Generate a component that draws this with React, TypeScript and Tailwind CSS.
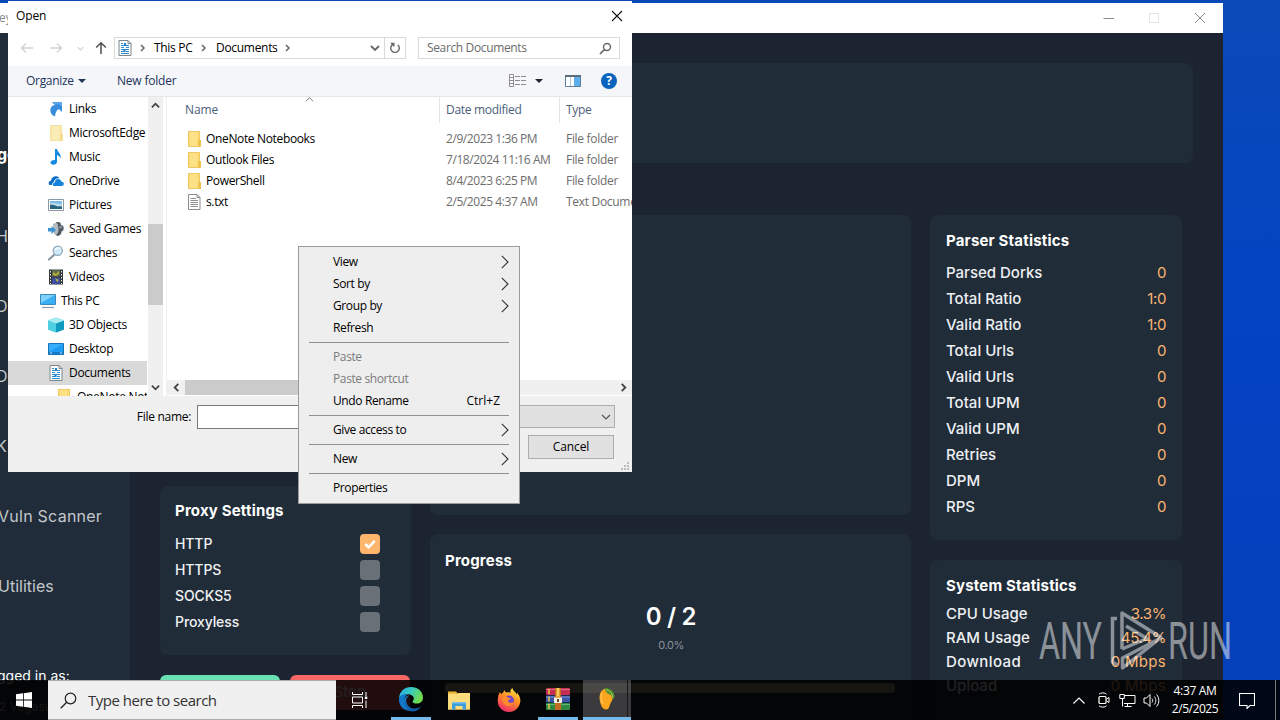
import React from "react";

const SEG = "font-['Open_Sans','Noto_Sans',sans-serif]";
const POP = "font-['Inter','Open_Sans',sans-serif]";

/* ---------- small icons ---------- */

function Folder({ pale = false }: { pale?: boolean }) {
  return (
    <svg width="16" height="16" viewBox="0 0 16 16" className="shrink-0">
      <path d="M2 0h12v16H2z" fill={pale ? "#f8e7a8" : "#fbdc77"} />
      <path d="M2.500 .5h11v15h-11z" fill="none" stroke={pale ? "#f3e1a0" : "#efc862"} />
      <path d="M12 9h3v7h-3z" fill={pale ? "#f4dd91" : "#efc14f"} />
      <path d="M4 1h7v14H4z" fill={pale ? "#fbeebb" : "#fde38d"} opacity=".7" />
    </svg>
  );
}

function DocIcon() {
  return (
    <svg width="16" height="16" viewBox="0 0 16 16" className="shrink-0">
      <path d="M2 .5h9l3 3v12H2z" fill="#fdfdfd" stroke="#7d868d" />
      <path d="M11 .5v3h3" fill="none" stroke="#7d868d" />
      <path d="M4 3.500h2M4 5.500h8M4 7.500h3M9 7.500h3M4 9.500h8M4 11.500h3M9 11.500h3M4 13.500h8" stroke="#2f8bd0" />
      <path d="M7 3h2v3H7zM6.500 9h2v3h-2z" fill="#2382cf" />
    </svg>
  );
}

function TxtIcon() {
  return (
    <svg width="16" height="16" viewBox="0 0 16 16" className="shrink-0">
      <path d="M2.500 .5h8.500l3 3v12H2.500z" fill="#fff" stroke="#8b8b8b" />
      <path d="M11 .5v3h3" fill="none" stroke="#8b8b8b" />
      <path d="M4.500 4.500H10M4.500 6.500H12M4.500 8.500H12M4.500 10.500H12M4.500 12.500H12" stroke="#8f8f8f" />
    </svg>
  );
}

function LinksIcon() {
  return (
    <svg width="16" height="16" viewBox="0 0 16 16" className="shrink-0">
      <path d="M4 1h10v10l-3.200-3C8 9.500 7.500 12 7 15.500 2.500 14 1.500 9 3 6.500c1-1.700 2-2 4-2.500z" fill="#3a8ddb" />
      <path d="M4 1h10v4C11 3 8 3 7 4z" fill="#5aa6ea" />
    </svg>
  );
}

function MusicIcon() {
  return (
    <svg width="16" height="16" viewBox="0 0 16 16" className="shrink-0">
      <path d="M7 0h2c.3 3 4.500 4.500 3.700 9.500-.9-2.300-2-3-3.700-3.300V13c0 1.500-1.800 2.800-3.800 2.800-1.600 0-2.700-.9-2.700-2.200 0-1.700 2-2.900 4.500-2.700z" fill="#138bdf" />
    </svg>
  );
}

function OneDriveIcon() {
  return (
    <svg width="16" height="16" viewBox="0 0 16 16" className="shrink-0">
      <path d="M1 11.500C0 9.500 1.500 7.800 3 7.700 3.500 5 5.500 3.200 8 3.300c1.500 0 2.800.8 3.500 2C8 5 6 7 5.700 9.200 4.200 9.800 4 11 4.200 12 2.500 12.300 1.500 12 1 11.500z" fill="#0a6cc4" />
      <path d="M5 12.500c-.5-1.800.5-2.800 1.800-3C7 7 8.500 6 10 6c2 0 3 1.200 3.200 2.600 1.800 0 2.600 1 2.600 2.200 0 1.500-1 2.200-2.500 2.200H6.500c-.8 0-1.300-.1-1.500-.5z" fill="#1583dd" />
    </svg>
  );
}

function PicturesIcon() {
  return (
    <svg width="16" height="16" viewBox="0 0 16 16" className="shrink-0">
      <path d="M.5 2.500h15v11H.5z" fill="#fff" stroke="#8b97a1" />
      <path d="M2 4h12v8H2z" fill="#79bbe8" />
      <path d="M2 6.500c4-2 7 1.500 12 0V12H2z" fill="#b8d9e8" />
      <path d="M2 8c3-1 5 .5 7 1.200 2 .6 3-.3 5 .3V12H2z" fill="#2b6183" />
    </svg>
  );
}

function GamesIcon() {
  return (
    <svg width="16" height="16" viewBox="0 0 16 16" className="shrink-0">
      <path d="M8 1.500c3-1 5 0 5 2.500 2.500.5 3 2 2.500 4.500-.3 1.500-1.500 2-2 1.500.3 2.500-1 4.500-3.500 5-2-.5-4-2-4-5z" fill="#4e585f" />
      <path d="M5 3c1.500-1.500 4-1.500 5 0-.5 3 1 4 .5 7-.5 2-1.500 3-2.500 4-2-1-3-6-3-11z" fill="#b4bcc1" />
      <path d="M0 7h3.500V5L8 9l-4.500 4v-2.500H0z" fill="#3c91d3" />
      <circle cx="12.500" cy="6" r="1.500" fill="#8c969c" />
    </svg>
  );
}

function SearchesIcon() {
  return (
    <svg width="16" height="16" viewBox="0 0 16 16" className="shrink-0">
      <path d="M1 14.500 6.500 9.500" stroke="#8b98a3" strokeWidth="2.200" strokeLinecap="round" />
      <circle cx="9.800" cy="5.800" r="4.600" fill="#cfe8f8" stroke="#8fa9bb" strokeWidth="1.200" />
      <path d="M7 5c.8-2 3-2.800 5-1.500" stroke="#fff" strokeWidth="1.300" fill="none" />
    </svg>
  );
}

function VideosIcon() {
  return (
    <svg width="16" height="16" viewBox="0 0 16 16" className="shrink-0">
      <path d="M1 .5h14v15H1z" fill="#33363b" />
      <path d="M4 1h8v6.500H4z" fill="#5b6b4c" />
      <path d="M4 8.500h8V15H4z" fill="#3b4ea0" />
      <path d="M5 3l3 2 3-3v3L8 7 5 6zM7 9l4 2-2 2z" fill="#b9b13a" />
      <path d="M2.500 2v13M13.500 2v13" stroke="#e8e8e8" strokeDasharray="1.500 1.500" />
    </svg>
  );
}

function ThisPcIcon() {
  return (
    <svg width="16" height="16" viewBox="0 0 16 16" className="shrink-0">
      <path d="M.5 1.500h15v10H.5z" fill="#3aaef2" stroke="#3989bd" />
      <path d="M1 2h14L1 10z" fill="#7fd0fb" />
      <path d="M2 14.500h12" stroke="#8b9ba8" strokeWidth="1.200" />
    </svg>
  );
}

function CubeIcon() {
  return (
    <svg width="16" height="16" viewBox="0 0 16 16" className="shrink-0">
      <path d="M8 .5 16 3.500v9L8 15.500 0 12.500v-9z" fill="#21b6d3" />
      <path d="M0 3.500 8 6.500v9L0 12.500z" fill="#4fd0e2" />
      <path d="M8 6.500 16 3.500v9l-8 3z" fill="#0f9abf" />
      <path d="M0 3.500 8 .5l8 3-8 3z" fill="#a8ecf3" />
    </svg>
  );
}

function DesktopIcon() {
  return (
    <svg width="16" height="16" viewBox="0 0 16 16" className="shrink-0">
      <path d="M.5 2.500h15v11H.5z" fill="#1c9cf3" stroke="#1673b8" />
      <path d="M1 3h14L1 11z" fill="#39aefa" />
      <path d="M1 12h14" stroke="#0c5f9e" />
      <path d="M2 12h2M12 12h2" stroke="#cfeaff" />
    </svg>
  );
}

function Arrow({ d, size = 10, stroke = "#444", w = 1.500, className = "" }: { d: string; size?: number; stroke?: string; w?: number; className?: string }) {
  return (
    <svg width={size} height={size} viewBox="0 0 10 10" className={`shrink-0 ${className}`}>
      <path d={d} fill="none" stroke={stroke} strokeWidth={w} />
    </svg>
  );
}

const RIGHT = "M3 2 6 5 3 8";
const DOWN = "M1 3 5 7 9 3";
const UP = "M1 7 5 3 9 7";
const LEFT = "M7 1 3 5 7 9";

/* ---------- parser application ---------- */

function StatRow({ label, value, className }: { label: string; value: string; className: string }) {
  return (
    <div className={`flex items-center justify-between text-[15px] ${className}`}>
      <span className={`font-medium text-[#edf0f2] ${label === "Download" ? "tracking-[0.4px]" : ""}`}>{label}</span>
      <span className={`text-[#fbb471] ${value === "0 Mbps" ? "tracking-[0.3px]" : "tracking-[-0.4px]"}`}>{value}</span>
    </div>
  );
}

const parserStats = [
  ["Parsed Dorks", "0"],
  ["Total Ratio", "1:0"],
  ["Valid Ratio", "1:0"],
  ["Total Urls", "0"],
  ["Valid Urls", "0"],
  ["Total UPM", "0"],
  ["Valid UPM", "0"],
  ["Retries", "0"],
  ["DPM", "0"],
  ["RPS", "0"],
];

const systemStats = [
  ["CPU Usage", "3.3%"],
  ["RAM Usage", "45.4%"],
  ["Download", "0 Mbps"],
  ["Upload", "0 Mbps"],
];

const card = "rounded-lg bg-[#212c39]";
const heading = "text-[15px] leading-[24px] font-bold tracking-[0.18px] text-white";

function ParserWindow() {
  return (
    <div className={`absolute left-0 top-[3px] flex h-[717px] w-[1223px] flex-col bg-[#1c2431] ${POP}`}>
      <div className="flex h-[30px] shrink-0 items-center justify-between bg-white pr-[17px]">
        <span className={`-ml-px text-[12px] text-[#888] ${SEG}`}>ey</span>
        <div className="flex items-center gap-[34px]">
          <svg width="12" height="12" viewBox="0 0 12 12"><path d="M1.500 6.500h10.500" stroke="#8a8a8a" /></svg>
          <svg width="12" height="12" viewBox="0 0 12 12"><path d="M1.500 1.500h9v9h-9z" fill="none" stroke="#e4e4e4" /></svg>
          <svg width="12" height="12" viewBox="0 0 12 12"><path d="M1 1l10 10M11 1 1 11" stroke="#888" /></svg>
        </div>
      </div>
      <div className="flex min-h-0 flex-1">
        <div className="flex w-[130px] shrink-0 flex-col overflow-hidden whitespace-nowrap bg-[#202c39] pt-[86px] text-[16px] text-[#c3c7cb]">
          <div className="-ml-[3px] h-[70px] leading-[70px] font-bold text-white">go</div>
          <div className="-ml-[4px] h-[70px] pt-[12px] leading-[70px]">H</div>
          <div className="-ml-[4px] h-[70px] pt-[12px] leading-[70px]">D</div>
          <div className="-ml-[4px] h-[70px] pt-[12px] leading-[70px]">D</div>
          <div className="-ml-[4px] h-[70px] pt-[12px] leading-[70px]">K</div>
          <div className="-ml-[2px] h-[70px] pt-[12px] leading-[70px] tracking-[0.25px]">Vuln Scanner</div>
          <div className="-ml-[2px] h-[70px] pt-[12px] leading-[70px]">Utilities</div>
          <div className="-ml-[3px] pt-[54px] text-[14px] leading-[26px] text-white">gged in as:</div>
          <div className="-ml-[1px] pt-[8px] text-[12px] leading-[20px] text-[#a0a5aa]">2 Vegasust</div>
        </div>
        <div className="flex min-w-0 flex-1 flex-col overflow-hidden pl-[30px] pt-[30px]">
          <div className={`h-[100px] w-[1033px] shrink-0 ${card}`} />
          <div className="mt-[52px] flex gap-[19px]">
            <div className="flex w-[251px] shrink-0 flex-col gap-5">
              <div className={`h-[251px] ${card}`} />
              <div className={`h-[169px] px-[15px] pt-[13px] ${card}`}>
                <div className={heading}>Proxy Settings</div>
                <div className="mt-2 flex flex-col">
                  {["HTTP", "HTTPS", "SOCKS5", "Proxyless"].map((name, i) => (
                    <div key={name} className="flex h-[26px] items-center justify-between pr-[16px] text-[14px] text-[#f0f2f4]">
                      <span className="pb-px font-medium tracking-[-0.1px]">{name}</span>
                      {i === 0 ? (
                        <span className="flex size-5 items-center justify-center rounded bg-[#feb56c]">
                          <svg width="12" height="10" viewBox="0 0 12 10"><path d="M1.200 5 4.600 8.300 10.800 1.800" fill="none" stroke="#fff" strokeWidth="2.600" /></svg>
                        </span>
                      ) : (
                        <span className="size-5 rounded bg-[#6a7078]" />
                      )}
                    </div>
                  ))}
                </div>
              </div>
              <div className="flex gap-[10px]">
                <div className="flex h-[35px] w-[120px] items-center justify-center rounded-md bg-[#68e0b2]" />
                <div className="flex h-[35px] w-[120px] items-center justify-center rounded-md bg-[#f96766] text-[15px] text-white">Stop</div>
              </div>
            </div>
            <div className="flex w-[481px] shrink-0 flex-col gap-[19px]">
              <div className={`h-[300px] ${card}`} />
              <div className={`h-[190px] px-[15px] pt-[15px] ${card}`}>
                <div className={heading}>Progress</div>
                <div className="mt-[26px] pl-px text-center text-[24px] leading-[36px] font-semibold tracking-[-0.3px] text-white">0 / 2</div>
                <div className="mt-[3px] pl-px text-center text-[11px] leading-[14px] tracking-[-0.4px] text-[#8b929a]">0.0%</div>
                <div className="mt-[31px] h-[10px] w-[450px] rounded-[4px] bg-[#b4a48a]" />
              </div>
            </div>
            <div className="flex w-[252px] shrink-0 flex-col gap-5">
              <div className={`h-[325px] px-4 pt-[14px] ${card}`}>
                <div className={heading}>Parser Statistics</div>
                <div className="mt-[7px]">
                  {parserStats.map(([l, v]) => <StatRow key={l} label={l} value={v} className="h-[26px]" />)}
                </div>
              </div>
              <div className={`h-[180px] px-4 pt-[14px] ${card}`}>
                <div className={heading}>System Statistics</div>
                <div className="mt-[4px]">
                  {systemStats.map(([l, v]) => <StatRow key={l} label={l} value={v} className="h-[24px]" />)}
                </div>
              </div>
            </div>
          </div>
        </div>
      </div>
    </div>
  );
}

/* ---------- open dialog ---------- */

const tree: [string, React.ReactNode][] = [
  ["Links", <LinksIcon />],
  ["MicrosoftEdge", <Folder pale />],
  ["Music", <MusicIcon />],
  ["OneDrive", <OneDriveIcon />],
  ["Pictures", <PicturesIcon />],
  ["Saved Games", <GamesIcon />],
  ["Searches", <SearchesIcon />],
  ["Videos", <VideosIcon />],
  ["This PC", <ThisPcIcon />],
  ["3D Objects", <CubeIcon />],
  ["Desktop", <DesktopIcon />],
  ["Documents", <DocIcon />],
  ["OneNote Not", <Folder />],
];

const files = [
  ["OneNote Notebooks", "2/9/2023 1:36 PM", "File folder"],
  ["Outlook Files", "7/18/2024 11:16 AM", "File folder"],
  ["PowerShell", "8/4/2023 6:25 PM", "File folder"],
  ["s.txt", "2/5/2025 4:37 AM", "Text Document"],
];

function treeIndent(name: string) {
  if (name === "This PC") return "pl-8";
  if (name === "OneNote Not") return "pl-12";
  if (name === "Documents") return "pl-10 bg-[#d9d9d9]";
  return "pl-10";
}

function OpenDialog() {
  return (
    <div className={`absolute left-[8px] top-px flex h-[471px] w-[624px] flex-col overflow-hidden whitespace-nowrap bg-white text-[12px] tracking-[-0.3px] text-black ${SEG}`}>
      <div className="flex h-[29px] shrink-0 items-center justify-between pl-2 pr-[9px]">
        <span className="pt-px tracking-[-0.1px]">Open</span>
        <svg width="12" height="12" viewBox="0 0 12 12"><path d="M1 1l10 10M11 1 1 11" stroke="#111" strokeWidth="1.100" /></svg>
      </div>
      <div className="flex h-[36px] shrink-0 items-center pl-[12px] pr-3">
        <svg width="14" height="12" viewBox="0 0 14 12"><path d="M13 6H1.500M6 1.500 1.500 6 6 10.500" fill="none" stroke="#d2d2d2" strokeWidth="1.300" /></svg>
        <svg width="14" height="12" viewBox="0 0 14 12" className="ml-[15px]"><path d="M1 6h11.500M8 1.500 12.500 6 8 10.500" fill="none" stroke="#d2d2d2" strokeWidth="1.300" /></svg>
        <Arrow d={DOWN} size={7} stroke="#cfcfcf" className="ml-[14px]" />
        <svg width="12" height="14" viewBox="0 0 12 14" className="ml-[11px]"><path d="M6 13V2M1.200 6.500 6 1.800l4.800 4.700" fill="none" stroke="#555" strokeWidth="1.600" /></svg>
        <div className="ml-[7px] flex h-[22px] w-[292px] items-center border border-[#d9d9d9]">
          <div className="ml-[2px] flex"><DocIcon /></div>
          <Arrow d={RIGHT} stroke="#666" className="ml-[5px]" />
          <span className="ml-[6px] w-[40px]">This PC</span>
          <Arrow d={RIGHT} stroke="#666" className="ml-[5px]" />
          <span className="ml-[7px] w-[62px]">Documents</span>
          <Arrow d={RIGHT} stroke="#666" className="ml-[5px]" />
          <Arrow d={DOWN} stroke="#666" w={1.800} className="ml-auto mr-[4px]" />
          <div className="flex h-full w-[21px] items-center justify-center border-l border-[#d9d9d9]">
            <svg width="12" height="12" viewBox="0 0 12 12"><path d="M8.800 2.800A4.300 4.300 0 1 1 4 2.300M1.800 1.500h3v3" fill="none" stroke="#666" strokeWidth="1.400" /></svg>
          </div>
        </div>
        <div className="ml-[12px] flex h-[22px] flex-1 items-center justify-between border border-[#d9d9d9] pl-[8px] pr-[7px] text-[#6b6b6b]">
          <span className="tracking-[-0.36px]">Search Documents</span>
          <svg width="13" height="13" viewBox="0 0 13 13"><circle cx="8" cy="5" r="3.500" fill="none" stroke="#666" strokeWidth="1.400" /><path d="M5.500 7.500 1 12" stroke="#666" strokeWidth="1.700" /></svg>
        </div>
      </div>
      <div className="flex h-[31px] shrink-0 items-center border-b border-[#e4e8ec] bg-[#f4f6f9] pl-[18px] pr-[15px] text-[#23335a]">
        <span className="w-[48px]">Organize</span>
        <svg width="8" height="4" viewBox="0 0 8 4" className="ml-[4px]"><path d="M0 0h8L4 4z" fill="#23335a" /></svg>
        <span className="ml-[31px] tracking-[-0.2px]">New folder</span>
        <svg width="17" height="14" viewBox="0 0 17 14" className="ml-auto">
          <path d="M.5 .5h4v12h-4zM.5 3.500h4M.5 6.500h4M.5 9.500h4" fill="#fff" stroke="#8d8d8d" />
          <path d="M6 2.500h5M12 2.500h5M6 6.500h5M12 6.500h5M6 10.500h5M12 10.500h5" stroke="#8d8d8d" />
        </svg>
        <svg width="8" height="4" viewBox="0 0 8 4" className="ml-[9px]"><path d="M0 0h8L4 4z" fill="#1e2430" /></svg>
        <svg width="16" height="12" viewBox="0 0 16 12" className="ml-[22px]">
          <path d="M.5 .5h15v11H.5z" fill="#fff" stroke="#5b7f9c" /><path d="M0 1h16" stroke="#5d6c78" strokeWidth="2" /><path d="M9 2h6v9H9z" fill="#5caeec" /><path d="M5.500 2v9" stroke="#b9c5cd" />
        </svg>
        <span className="ml-[20px] flex size-4 items-center justify-center rounded-full bg-[#0a64bd] text-[12px] leading-none font-bold text-white">?</span>
      </div>
      <div className="flex h-[299px] shrink-0 overflow-hidden">
        <div className="flex w-[139px] shrink-0 flex-col overflow-hidden">
          {tree.map(([name, icon]) => (
            <div key={name} className={`flex h-6 shrink-0 items-center gap-[5px] ${treeIndent(name)}`}>
              {icon}
              <span>{name}</span>
            </div>
          ))}
        </div>
        <div className="ml-px flex w-[15px] shrink-0 flex-col items-center bg-[#f0f0f0]">
          <div className="flex h-[17px] items-center"><Arrow d={UP} size={9} w={2} /></div>
          <div className="mt-[110px] h-[81px] w-full bg-[#cbcbcb]" />
          <div className="mt-auto flex h-[17px] items-center"><Arrow d={DOWN} size={9} w={2} /></div>
        </div>
        <div className="ml-[1px] w-[3px] shrink-0 border-r border-[#f0f0f0]" />
        <div className="flex min-w-0 flex-1 flex-col">
          <div className="flex h-[26px] shrink-0 text-[#4c607a]">
            <div className="flex w-[273px] shrink-0 items-center justify-between border-r border-[#e5e5e5] pl-[18px]">
              <span className="tracking-[-0.1px]">Name</span>
              <Arrow d={UP} size={9} stroke="#777" w={1.100} className="mr-[125px] mb-[21px]" />
            </div>
            <div className="flex w-[120px] shrink-0 items-center border-r border-[#e5e5e5] pl-[6px]">Date modified</div>
            <div className="flex items-center pl-[6px]">Type</div>
          </div>
          <div className="mt-[5px] flex flex-col">
            {files.map(([name, date, type]) => (
              <div key={name} className="flex h-[21px] items-center text-[#6d6d6d]">
                <div className="flex w-[279px] shrink-0 items-center gap-[4px] pl-[19px] text-black">
                  {name === "s.txt" ? <TxtIcon /> : <Folder />}
                  <span className="tracking-[-0.35px]">{name}</span>
                </div>
                <span className="w-[120px] shrink-0 tracking-[-0.42px]">{date}</span>
                <span>{type}</span>
              </div>
            ))}
          </div>
          <div className="mt-auto mb-px flex h-[15px] items-center bg-[#f0f0f0]">
            <Arrow d={LEFT} size={9} w={2} className="ml-[5px]" />
            <div className="ml-[4px] h-full w-[200px] bg-[#cbcbcb]" />
            <Arrow d="M3 1 7 5 3 9" size={9} w={2} className="ml-auto mr-[4px]" />
          </div>
        </div>
      </div>
      <div className="relative flex flex-1 flex-col bg-[#f0f0f0]">
        <div className="flex pt-[9px] pr-[17px]">
          <span className="w-[189px] shrink-0 pr-[6px] text-right leading-[23px]">File name:</span>
          <div className="h-[24px] w-[250px] border border-[#7a7a7a] bg-white" />
          <div className="ml-[8px] flex h-[23px] flex-1 items-center justify-end border border-[#adadad] bg-[#e1e1e1] pr-[3px]">
            <Arrow d={DOWN} stroke="#555" w={1.200} />
          </div>
        </div>
        <div className="mt-[6px] flex justify-end pr-[18px]">
          <div className="flex h-[24px] w-[86px] items-center justify-center border border-[#adadad] bg-[#e1e1e1] tracking-[-0.1px]">Cancel</div>
        </div>
        <svg width="9" height="9" viewBox="0 0 9 9" className="absolute right-[2px] bottom-[1px]">
          <path d="M6 0h2v2H6zM3 3h2v2H3zM6 3h2v2H6zM0 6h2v2H0zM3 6h2v2H3zM6 6h2v2H6z" fill="#bdbdbd" />
        </svg>
      </div>
    </div>
  );
}

/* ---------- context menu ---------- */

type Entry = { label: string; sub?: boolean; off?: boolean; keys?: string } | null;

const entries: Entry[] = [
  { label: "View", sub: true },
  { label: "Sort by", sub: true },
  { label: "Group by", sub: true },
  { label: "Refresh" },
  null,
  { label: "Paste", off: true },
  { label: "Paste shortcut", off: true },
  { label: "Undo Rename", keys: "Ctrl+Z" },
  null,
  { label: "Give access to", sub: true },
  null,
  { label: "New", sub: true },
  null,
  { label: "Properties" },
];

function ContextMenu() {
  return (
    <div className={`absolute left-[298px] top-[246px] flex h-[258px] w-[222px] flex-col border border-[#9b9b9b] bg-[#eeeeee] py-1 text-[12px] text-black ${SEG}`}>
      {entries.map((e, i) =>
        e === null ? (
          <div key={i} className="mx-[10px] flex h-[7px] shrink-0 items-center"><div className="h-px w-full bg-[#919191]" /></div>
        ) : (
          <div key={i} className={`flex h-[22px] shrink-0 items-center justify-between pl-[34px] ${e.off ? "text-[#7b7b7b]" : ""}`}>
            <span className="tracking-[-0.38px]">{e.label}</span>
            {e.keys && <span className="pr-[19px]">{e.keys}</span>}
            {e.sub && (
              <svg width="8" height="14" viewBox="0 0 8 14" className="mr-[10px]"><path d="M.8 .8 7 7 .8 13.200" fill="none" stroke="#333" strokeWidth="1.100" /></svg>
            )}
          </div>
        ),
      )}
    </div>
  );
}

/* ---------- taskbar ---------- */

function EdgeIcon() {
  return (
    <svg width="26" height="26" viewBox="0 0 26 26">
      <defs>
        <linearGradient id="e1" x1="0" y1="0" x2="1" y2=".4"><stop offset="0" stopColor="#2aa7e8" /><stop offset=".5" stopColor="#35c9c3" /><stop offset="1" stopColor="#6fdc4e" /></linearGradient>
        <linearGradient id="e2" x1="0" y1="0" x2="0" y2="1"><stop offset="0" stopColor="#1787d8" /><stop offset="1" stopColor="#0c59a4" /></linearGradient>
      </defs>
      <path d="M1 12C1.500 5.500 6.500 1 13 1c7 0 12 4.800 12 10.500 0 4-3 6-6.200 6-2.400 0-4.300-.8-4.300-1.800 0-.7 1.300-1.200 1.300-3.200 0-2.500-2.800-4.300-6-4.300-4 0-7.500 1.800-8.800 3.800z" fill="url(#e1)" />
      <path d="M1 12c1-2.500 4.800-4.500 8.500-3.800-2 1.200-3.300 3.500-3 6.300.4 5.500 4.500 10 9.500 10.200C8 26.500 0 21 1 12z" fill="#1279c9" />
      <path d="M11 9.500c-2.500 1.500-3.500 4.500-2.500 7.500 1.200 3.500 4.500 5.500 8 5.500 2.500 0 4.500-.7 6.500-2-1.800 3-5 5-9 5-4.500-.5-8-5-8-9.500 0-4 2.500-6.500 5-6.500z" fill="url(#e2)" />
    </svg>
  );
}

function ExplorerIcon() {
  return (
    <svg width="22" height="19" viewBox="0 0 22 19">
      <path d="M0 .5h8l2 2.500h12v15.500H0z" fill="#f3b93c" />
      <path d="M0 3h8.500l2-1H22v16.500H0z" fill="#fddc7b" />
      <path d="M4 18.500V11h14v7.500h-3.500v-3.500h-7v3.500z" fill="#3d9edb" />
      <path d="M4 11h14v1.500H4z" fill="#78c0ec" />
    </svg>
  );
}

function FirefoxIcon() {
  return (
    <svg width="24" height="24" viewBox="0 0 24 24">
      <defs>
        <linearGradient id="f1" x1=".8" y1="0" x2=".3" y2="1"><stop offset="0" stopColor="#ffe84a" /><stop offset=".45" stopColor="#ff9023" /><stop offset="1" stopColor="#f0276d" /></linearGradient>
      </defs>
      <path d="M3 4c.3 1 .8 1.600 1.500 2C6 4.500 7 3.500 7.500 2c.5 1.500 1 2 2 2.500 1.800-.5 3-.2 4 .3C13 2.500 14 1 15.500 0c.3 2 1.500 3 3 4.500.8.500 1 1.500 1.200 2 .5-.5.500-1 .3-2 2.500 3 3.700 6 3.300 9C22.500 19.500 18 24 12 24 5.500 24 .7 19 .7 13 .7 9.500 1.500 6 3 4z" fill="url(#f1)" />
      <circle cx="12" cy="12.500" r="5" fill="#7046cf" />
      <path d="M5 9.500c2-2 5-1.500 6.500.5h2.500c-.5 1.500-2.500 1.500-3 3 .5 2 3.500 2.500 5.500.5-.5 3.500-3 5-5.500 4.500C7 17.500 4.500 13.500 5 9.500z" fill="#ff8b2c" />
    </svg>
  );
}

function WinrarIcon() {
  return (
    <svg width="24" height="22" viewBox="0 0 24 22">
      <rect width="24" height="7" y="0" rx="1" fill="#c32f52" />
      <rect width="24" height="7" y="7.500" rx="1" fill="#3b55a8" />
      <rect width="24" height="7" y="15" rx="1" fill="#2e8a43" />
      <path d="M0 1.500h24" stroke="#e06a83" />
      <path d="M0 9h24" stroke="#7b92d6" />
      <path d="M0 16.500h24" stroke="#62b874" />
      <path d="M3 1v20" stroke="#e8c64c" strokeWidth="1.500" strokeDasharray="5 2.500" />
      <path d="M9 0h6v22H9z" fill="#c46a21" />
      <path d="M12 0v9" stroke="#f6cc56" strokeWidth="3" />
      <path d="M8 9.500h8V15H8z" fill="#f5efe0" />
      <path d="M10 8h4v2h-4z" fill="#e9a93d" />
      <path d="M11 11h2v3h-2z" fill="#5b4630" />
    </svg>
  );
}

function MangoIcon() {
  return (
    <svg width="16" height="22" viewBox="0 0 16 22">
      <path d="M5 1C1 3 0 8 .8 12.500 1.500 17 3.500 21.500 7 21.500c3.500 0 3-3.500 5-7 1.500-3 3-5.500 2-8.500C13 2.500 9 .3 5 1z" fill="#fca61f" />
      <path d="M3 5c-1.500 3-1 8 1 11" stroke="#ffc65c" strokeWidth="1.200" fill="none" />
      <path d="M5 .5C10-.5 15.500 2 15.500 8.500c-.3 1.500-1 2.500-2 3C13.500 8 12 6.500 9.500 6 7.500 5.500 7 3 5 .5z" fill="#4e8c2f" />
      <path d="M7 1.500C11 2.500 13.500 5.500 14 9.500" stroke="#a9cf5e" strokeWidth="1" fill="none" />
    </svg>
  );
}

function Taskbar() {
  return (
    <div className={`absolute bottom-0 left-0 flex h-10 w-[1280px] items-stretch bg-black/87 ${SEG}`}>
      <div className="flex w-12 items-center justify-center">
        <svg width="16" height="16" viewBox="0 0 16 16"><path d="M0 2.300 7 1.300V7.600H0zM7.800 1.200 16 0v7.600H7.800zM0 8.400h7v6.300L0 13.700zM7.800 8.400H16V16l-8.200-1.200z" fill="#fff" /></svg>
      </div>
      <div className="flex w-[288px] items-center border-t border-b border-[#a9a9a9] bg-[#f0f0f0] pl-3 text-[#333]">
        <svg width="17" height="17" viewBox="0 0 17 17"><circle cx="10.500" cy="6.500" r="5.300" fill="none" stroke="#222" strokeWidth="1.200" /><path d="M6.700 10.300.7 16.300" stroke="#222" strokeWidth="1.300" /></svg>
        <span className="ml-[11px] text-[15px] tracking-[-0.5px]">Type here to search</span>
      </div>
      <div className="flex w-12 items-center justify-center">
        <svg width="16" height="16" viewBox="0 0 16 16"><path d="M.5 0v2.500h10V0M.5 16v-2.500h10V16M.5 5h10v6H.5zM14 0v4M14 8.500V16" fill="none" stroke="#fff" /><path d="M12.800 4.500h2.500v2.500h-2.500z" fill="#fff" /></svg>
      </div>
      <div className="mx-[7px] flex w-10 items-center justify-center border-b-[3px] border-[#76b9ed]"><EdgeIcon /></div>
      <div className="flex w-[42px] items-center justify-center"><ExplorerIcon /></div>
      <div className="ml-[9px] flex w-[40px] items-center justify-center"><FirefoxIcon /></div>
      <div className="ml-[9px] flex w-10 items-center justify-center border-b-[3px] border-[#76b9ed]"><WinrarIcon /></div>
      <div className="ml-[5px] flex w-12 border-b-[3px] border-[#76b9ed]">
        <div className="flex w-[45px] items-center justify-center border-r border-[#191919] bg-white/22 pl-[4px]"><MangoIcon /></div>
        <div className="flex-1 bg-white/22" />
      </div>
      <div className="ml-auto flex items-center text-white">
        <svg width="12" height="7" viewBox="0 0 12 7"><path d="M.5 6.500 6 1l5.500 5.500" fill="none" stroke="#fff" strokeWidth="1.200" /></svg>
        <svg width="14" height="16" viewBox="0 0 14 16" className="ml-[12px]">
          <rect x="2" y="4.500" width="7" height="7" rx="1" fill="none" stroke="#fff" strokeWidth="1.200" /><path d="M9.500 7 12 5.500v5L9.500 9M2 2.200C4 .4 7.500.4 9.500 2.200M2 13.800c2 1.800 5.500 1.800 7.500 0" fill="none" stroke="#fff" />
        </svg>
        <svg width="17" height="15" viewBox="0 0 17 15" className="ml-[8px]">
          <path d="M5 2.500h11v8H5M8.500 10.500v3M5.500 13.500h7M3.500 6v7.500" fill="none" stroke="#fff" /><path d="M.8 1.500h4.500v4H.8z" fill="none" stroke="#fff" />
        </svg>
        <svg width="17" height="15" viewBox="0 0 17 15" className="ml-[7px]">
          <path d="M1 5h2.500L7 1.500v12L3.500 10H1zM9 5.500c1 1.200 1 2.800 0 4M11.300 3.500c2 2.500 2 5.500 0 8M13.600 1.500c3 3.700 3 8.300 0 12" fill="none" stroke="#fff" />
        </svg>
        <div className="ml-[9px] flex w-[52px] flex-col items-center text-[12px] leading-[18px] whitespace-nowrap">
          <span className="tracking-[-0.35px]">4:37 AM</span>
          <span className="tracking-[-0.45px]">2/5/2025</span>
        </div>
        <svg width="16" height="17" viewBox="0 0 16 17" className="ml-[18px]"><path d="M.5 1.500h15v12H11L8 16.500v-3H.5z" fill="none" stroke="#fff" strokeWidth="1.100" /></svg>
        <div className="ml-[20px] mr-1 h-10 w-px bg-[#777]" />
      </div>
    </div>
  );
}

function Watermark() {
  return (
    <svg width="196" height="64" viewBox="0 0 196 64" className="absolute left-[1038px] top-[609px]" opacity=".48">
      <text x="1" y="50" fontFamily="Roboto, sans-serif" fontWeight="400" fontSize="52" textLength="63" lengthAdjust="spacingAndGlyphs" fill="#fff">ANY</text>
      <text x="130" y="50" fontFamily="Roboto, sans-serif" fontWeight="400" fontSize="52" textLength="64" lengthAdjust="spacingAndGlyphs" fill="#fff">RUN</text>
      <path d="M79 9.500H74.500V53L79 56" fill="none" stroke="#fff" strokeWidth="3.500" />
      <path d="M84 40V4L123 28.500 84.500 59V49L121 30M84 40 109 29.500 88 17" fill="none" stroke="#fff" strokeWidth="3.500" strokeLinejoin="round" />
    </svg>
  );
}

export default function App() {
  return (
    <div className="relative h-[720px] w-[1280px] overflow-hidden bg-linear-to-b from-[#0a4ab8] via-[#0442c4] to-[#0340b8]">
      <ParserWindow />
      <OpenDialog />
      <ContextMenu />
      <Taskbar />
      <Watermark />
    </div>
  );
}
